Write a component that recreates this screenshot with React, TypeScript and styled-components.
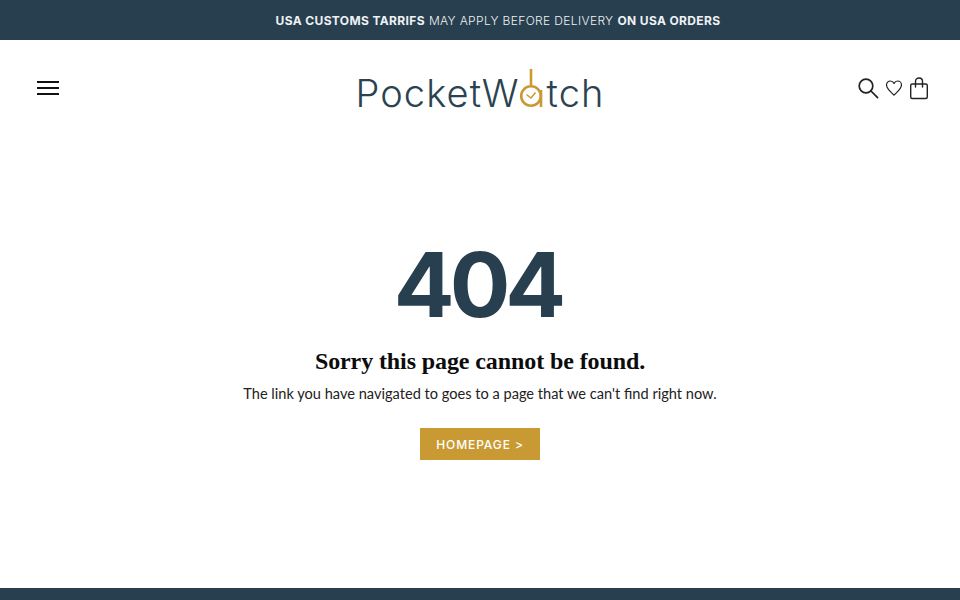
import React from 'react';
import styled, { createGlobalStyle } from 'styled-components';

const GlobalStyle = createGlobalStyle`
  html, body {
    margin: 0;
    padding: 0;
    height: 100%;
    background: #fff;
    overflow: hidden;
  }
  * {
    box-sizing: border-box;
  }
`;

const Page = styled.div`
  height: 600px;
  display: flex;
  flex-direction: column;
  font-family: 'Lato', 'Liberation Sans', sans-serif;
`;

const Announcement = styled.div`
  height: 40px;
  flex-shrink: 0;
  display: flex;
  align-items: center;
  justify-content: center;
  gap: 4px;
  padding-left: 36px;
  background: #273f4e;
  color: #eef2f4;
  font-family: 'Inter', 'Liberation Sans', sans-serif;
  font-size: 12px;
  font-weight: 300;
  letter-spacing: 0.36px;
`;

const Strong = styled.strong`
  font-weight: 700;
`;

const Header = styled.header`
  height: 96px;
  flex-shrink: 0;
  display: grid;
  grid-template-columns: 1fr auto 1fr;
  align-items: center;
  padding: 0 31px;
`;

const MenuButton = styled.div`
  width: 22px;
  margin: -1px 0 0 6px;
  display: flex;
  flex-direction: column;
  gap: 4px;
`;

const MenuLine = styled.span`
  display: block;
  height: 2px;
  background: #111;
`;

const Logo = styled.div`
  display: flex;
  align-items: baseline;
  height: 50px;
  padding-top: 7px;
  color: #2b4350;
  font-family: 'Inter', 'Liberation Sans', sans-serif;
  font-size: 38px;
  font-weight: 300;
  line-height: 46px;
  letter-spacing: 1.1px;
`;

const LogoMark = styled.svg`
  width: 26px;
  height: 42px;
  align-self: flex-end;
  margin: 0 2px 3px -1px;
`;

const Icons = styled.div`
  display: flex;
  justify-content: flex-end;
  align-items: center;
  gap: 6px;
  color: #222;
`;

const Main = styled.main`
  flex: 1;
  display: flex;
  flex-direction: column;
  align-items: center;
  padding-top: 94px;
`;

const Code = styled.div`
  margin-right: 5px;
  color: #273f4e;
  font-family: 'Inter', 'Liberation Sans', sans-serif;
  font-size: 90px;
  font-weight: 700;
  line-height: 110px;
  letter-spacing: -5px;
`;

const Title = styled.h1`
  margin: 6px 0 0;
  color: #0c0c0c;
  font-family: 'Liberation Serif', serif;
  font-size: 24px;
  font-weight: 700;
  line-height: 30px;
  letter-spacing: -0.1px;
`;

const Message = styled.p`
  margin: 7px 0 0;
  color: #222;
  font-family: 'Lato', 'Liberation Sans', sans-serif;
  font-size: 14.6px;
  font-weight: 400;
  line-height: 22px;
`;

const HomeLink = styled.a`
  margin-top: 23px;
  width: 120px;
  height: 32px;
  display: flex;
  align-items: center;
  justify-content: center;
  background: #c99a33;
  color: #fff;
  font-family: 'Inter', 'Liberation Sans', sans-serif;
  font-size: 12px;
  font-weight: 500;
  letter-spacing: 0.9px;
`;

const FooterBar = styled.footer`
  height: 12px;
  flex-shrink: 0;
  background: #273f4e;
`;

const SearchIcon = () => (
  <svg width="22" height="22" viewBox="0 0 22 22" fill="none" stroke="currentColor" strokeWidth="1.7">
    <circle cx="9" cy="9" r="6.8" />
    <path d="M14 14l6.6 6.6" strokeLinecap="round" />
  </svg>
);

const HeartIcon = () => (
  <svg width="18" height="18" viewBox="0 0 18 18" fill="none" stroke="currentColor" strokeWidth="1.2">
    <path d="M9 16.2C6.2 13.2 1.5 9.8 1.5 6c0-2.4 1.8-4 3.8-4 1.6 0 3 1 3.700 2.500C9.700 3 11.100 2 12.700 2c2 0 3.800 1.600 3.800 4 0 3.800-4.700 7.200-7.500 10.200z" strokeLinejoin="round" />
  </svg>
);

const BagIcon = () => (
  <svg width="20" height="24" viewBox="0 0 20 24" fill="none" stroke="currentColor" strokeWidth="1.4">
    <rect x="1.700" y="8" width="16.600" height="14.500" rx="1.500" />
    <path d="M6.500 11V5.500C6.500 3.300 8 2 10 2s3.500 1.300 3.500 3.500V11" strokeLinecap="round" />
  </svg>
);

export default function App() {
  return (
    <Page>
      <GlobalStyle />
      <Announcement>
        <Strong>USA CUSTOMS TARRIFS</Strong>
        <span>MAY APPLY BEFORE DELIVERY</span>
        <Strong>ON USA ORDERS</Strong>
      </Announcement>
      <Header>
        <MenuButton>
          <MenuLine />
          <MenuLine />
          <MenuLine />
        </MenuButton>
        <Logo>
          PocketW
          <LogoMark viewBox="0 0 26 42" fill="none" stroke="#c99a33">
            <circle cx="12" cy="28" r="9.800" strokeWidth="2.600" />
            <path d="M12 1v18" strokeWidth="2.600" />
            <path d="M22 22v17" strokeWidth="2.600" />
            <path d="M7.500 26.500L12 30l4.500-5.500" strokeWidth="1.500" />
          </LogoMark>
          tch
        </Logo>
        <Icons>
          <SearchIcon />
          <HeartIcon />
          <BagIcon />
        </Icons>
      </Header>
      <Main>
        <Code>404</Code>
        <Title>Sorry this page cannot be found.</Title>
        <Message>The link you have navigated to goes to a page that we can't find right now.</Message>
        <HomeLink>HOMEPAGE &gt;</HomeLink>
      </Main>
      <FooterBar />
    </Page>
  );
}
